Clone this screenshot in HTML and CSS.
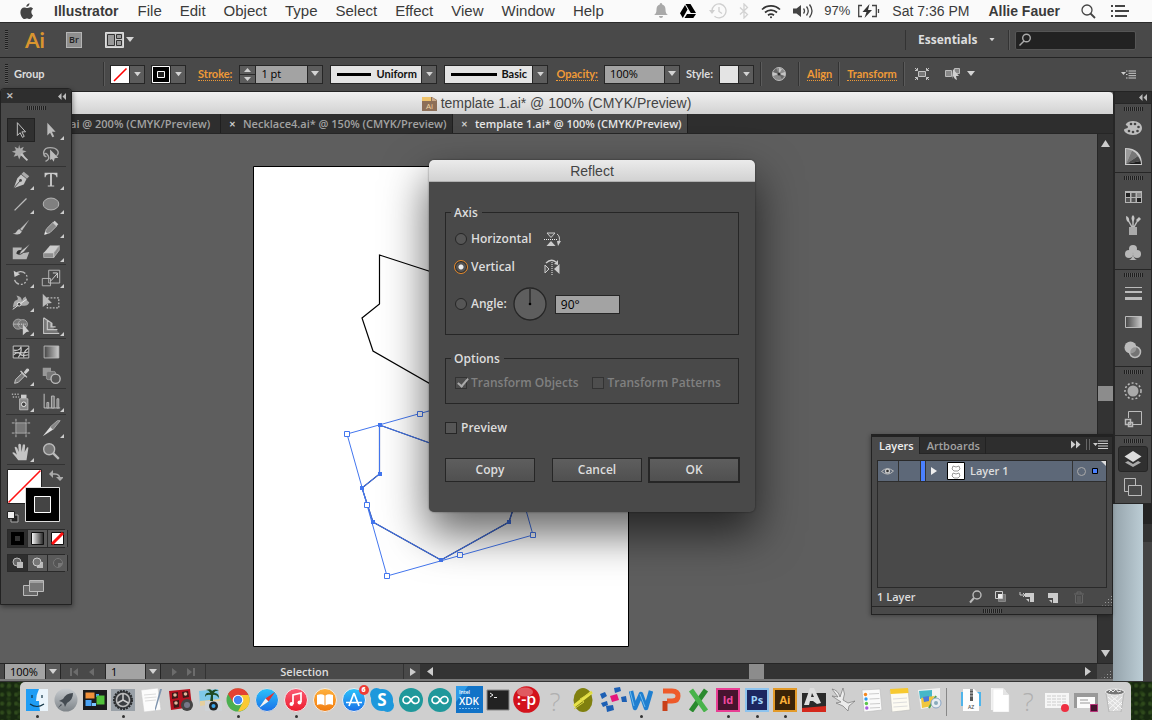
FILE: index.html
```html
<!DOCTYPE html>
<html lang="en">
<head>
<meta charset="utf-8">
<title>Illustrator - Reflect</title>
<link rel="stylesheet" href="styles.css">
</head>
<body>
<svg class="defs" aria-hidden="true">
  <defs>
    <linearGradient id="gGrey" x1="0" y1="0" x2="1" y2="0"><stop offset="0" stop-color="#444"/><stop offset="1" stop-color="#ccc"/></linearGradient>
    <linearGradient id="gWhite" x1="0" y1="0" x2="1" y2="0"><stop offset="0" stop-color="#fff"/><stop offset="1" stop-color="#222"/></linearGradient>
    <linearGradient id="gBlue" x1="0" y1="0" x2="0" y2="1"><stop offset="0" stop-color="#2cc3fa"/><stop offset="1" stop-color="#1a6fe8"/></linearGradient>
    <linearGradient id="gRed" x1="0" y1="0" x2="0" y2="1"><stop offset="0" stop-color="#fb5b74"/><stop offset="1" stop-color="#ec1c2c"/></linearGradient>
    <linearGradient id="gOrange" x1="0" y1="0" x2="0" y2="1"><stop offset="0" stop-color="#ffb13c"/><stop offset="1" stop-color="#f27a0c"/></linearGradient>
    <linearGradient id="gSilver" x1="0" y1="0" x2="0" y2="1"><stop offset="0" stop-color="#c8ccd0"/><stop offset="1" stop-color="#7d8388"/></linearGradient>
    <symbol id="down" viewBox="0 0 8 6"><path d="M0 0h8L4 5z" fill="#d4d4d4"/></symbol>
  </defs>
</svg>

<header class="menubar">
  <nav class="menus">
    <a href="#" class="apple" aria-label="Apple"><svg width="14" height="17" viewBox="0 0 14 17"><path d="M9.5.3c.1 1.900-1.400 3.500-3.200 3.500C6.200 2.100 7.700.5 9.500.3zM13 12.200c-.8 2-2.100 3.800-3.500 3.800-1 0-1.300-.6-2.500-.6s-1.600.6-2.500.6C2.600 16 .4 12.500.4 9.200c0-3.100 1.900-4.800 3.800-4.800 1.200 0 2.100.7 2.900.7.800 0 1.900-.8 3.300-.8 1.100 0 2.100.6 2.700 1.500-2.600 1.600-2 5.300-.1 6.400z" fill="#444"/></svg></a>
    <a href="#" class="app-name">Illustrator</a>
    <a href="#">File</a><a href="#">Edit</a><a href="#">Object</a><a href="#">Type</a><a href="#">Select</a><a href="#">Effect</a><a href="#">View</a><a href="#">Window</a><a href="#">Help</a>
  </nav>
  <div class="status">
    <svg width="14" height="16" viewBox="0 0 14 16"><path d="M7 0c1 0 1.200.8 1.200 1.500C10.500 2 11.500 4 11.500 6.500c0 3 .8 4.500 2.500 5.500H0c1.700-1 2.500-2.500 2.500-5.500 0-2.500 1-4.500 3.300-5C5.800.8 6 0 7 0zM5 13h4c0 1.200-.8 2-2 2s-2-.8-2-2z" fill="#a9a9a9"/></svg>
    <svg width="16" height="14" viewBox="0 0 16 14"><path d="M5.500 0h5L16 9h-5.200zM5 1l2.500 4.500L2.800 14 0 9.300zM7 10h9l-2.700 4H4.500z" fill="#000"/></svg>
    <svg width="19" height="16" viewBox="0 0 19 16" fill="none" stroke="#cfcfcf" stroke-width="1.300"><path d="M4 8a7 7 0 1 1 2.500 5.200M11 4v4.500l3 2"/><path d="M1 7l3 4 3-4z" fill="#cfcfcf" stroke="none"/></svg>
    <svg width="10" height="16" viewBox="0 0 10 16" fill="none" stroke="#d2d2d2" stroke-width="1.300"><path d="M1 4.500l7.500 7L5 15V1l3.500 3.500-7.500 7"/></svg>
    <svg width="20" height="15" viewBox="0 0 20 15" fill="none" stroke="#333" stroke-width="1.700"><path d="M1 5.500a13 13 0 0 1 18 0M4 8.500a9 9 0 0 1 12 0M7 11.200a5 5 0 0 1 6 0"/><circle cx="10" cy="13.300" r="1" fill="#333" stroke="none"/></svg>
    <svg width="21" height="16" viewBox="0 0 21 16" fill="none" stroke="#444" stroke-width="1.300"><path d="M0 5.500h3.500L8 2v12l-4.500-3.500H0z" fill="#444" stroke="none"/><path d="M10.500 5.500q2 2.500 0 5M13.500 3.500q3.500 4.500 0 9M16.500 1.500q5 6.500 0 13"/></svg>
    <span class="percent">97%</span>
    <svg width="23" height="14" viewBox="0 0 23 14" fill="none" stroke="#444" stroke-width="1.300"><path d="M5 1.500H1.700v11H5M15 1.500h4.300v11H15M21.500 5v4"/><path d="M12.500 0L5.500 8h4l-2 6 7.500-8h-4z" fill="#333" stroke="none"/></svg>
    <span class="clock">Sat 7:36 PM</span>
    <b class="user">Allie Fauer</b>
    <svg width="15" height="15" viewBox="0 0 15 15" fill="none" stroke="#444" stroke-width="1.300"><circle cx="6" cy="6" r="5"/><path d="M9.500 9.500L14 14" stroke-width="1.800"/></svg>
    <svg class="listico" width="18" height="12" viewBox="0 0 18 12" fill="#444"><path d="M0 0h2v2H0zM0 5h2v2H0zM0 10h2v2H0zM4 0h10v2H4zM4 5h14v2H4zM4 10h12v2H4z"/></svg>
  </div>
</header>

<div class="appbar">
  <i class="vgrip"></i>
  <span class="ai-logo">Ai</span>
  <button class="bridge" type="button">Br</button>
  <button class="plain arrange" type="button" aria-label="Arrange documents">
    <svg width="19" height="16" viewBox="0 0 19 16"><path d="M.5.500h18v15H.5z" fill="#c9c9c9" stroke="#ddd"/><path d="M2.500 2.500h7v11h-7zM11.500 2.500h5v4h-5zM11.500 8.500h5v5h-5z" fill="#999" stroke="#333"/></svg>
    <svg width="8" height="6"><use href="#down"/></svg>
  </button>
  <div class="appbar-right">
    <select class="workspace-name" aria-label="Workspace"><option>Essentials</option></select>
    <svg class="mini" width="6" height="4" viewBox="0 0 8 6"><use href="#down"/></svg>
    <i class="sep search-sep"></i>
    <label class="search"><svg width="14" height="14" viewBox="0 0 14 14" fill="none" stroke="#aaa" stroke-width="1.400"><circle cx="8.500" cy="5" r="3.800"/><path d="M6 8L1.500 12.500"/></svg><input type="text" aria-label="Search"></label>
  </div>
</div>

<div class="control">
  <i class="vgrip"></i>
  <span class="ctl-group">Group</span>
  <i class="sep"></i>
  <button class="picker fillpick" type="button" aria-label="Fill"><svg width="18" height="18"><path d="M0 0h18v18H0z" fill="#fff"/><path d="M3 15L15.500 2.500" stroke="#f00" stroke-width="1.600"/></svg><span class="arrow"><svg width="7" height="5"><use href="#down"/></svg></span></button>
  <button class="picker strokepick" type="button" aria-label="Stroke colour"><svg width="18" height="17"><path d="M.5.500h17v16H.5z" stroke="#fff"/><path d="M5.500 5.500h7v6h-7z" fill="#222" stroke="#fff"/></svg><span class="arrow"><svg width="7" height="5"><use href="#down"/></svg></span></button>
  <a href="#" class="link stroke-link">Stroke:</a>
  <div class="combo weight">
    <span class="spin"><svg width="15" height="17" viewBox="0 0 15 17"><path d="M0 8.500h15" stroke="#2c2c2c"/><path d="M4 6l3.500-4L11 6zM4 11l3.500 4 3.500-4z" fill="#d0d0d0"/></svg></span>
    <input type="text" value="1 pt" aria-label="Stroke weight">
    <button class="arrow" type="button" aria-label="Weights"><svg width="8" height="6"><use href="#down"/></svg></button>
  </div>
  <div class="brush profile"><i></i><select aria-label="Width profile"><option>Uniform</option></select><span class="arrow"><svg width="7" height="5"><use href="#down"/></svg></span></div>
  <div class="brush basic"><i></i><select aria-label="Brush"><option>Basic</option></select><span class="arrow"><svg width="7" height="5"><use href="#down"/></svg></span></div>
  <a href="#" class="link opacity-link">Opacity:</a>
  <div class="combo opacity">
    <input type="text" value="100%" aria-label="Opacity">
    <button class="arrow" type="button" aria-label="Opacities"><svg width="8" height="6"><use href="#down"/></svg></button>
  </div>
  <span class="style-label">Style:</span>
  <button class="picker stylepick" type="button" aria-label="Graphic style"><svg width="18" height="18"><path d="M0 0h18v18H0z" fill="#e4e4e4"/></svg><span class="arrow"><svg width="7" height="5"><use href="#down"/></svg></span></button>
  <i class="sep"></i>
  <button class="plain wheel" type="button" aria-label="Recolor"><svg width="14" height="14" viewBox="0 0 14 14"><circle cx="7" cy="7" r="6.500" fill="#8a8a8a" stroke="#bbb"/><path d="M7 7V1l3 1zM7 7l6-2v4zM7 7L1 9V5z" fill="#c4c4c4"/><path d="M7 7L1 5l3-4zM7 7l3 5 2-3z" fill="#666"/><circle cx="7" cy="7" r="1.500" fill="#333"/></svg></button>
  <i class="sep"></i>
  <a href="#" class="link">Align</a>
  <i class="sep"></i>
  <a href="#" class="link">Transform</a>
  <i class="sep"></i>
  <button class="plain isolate" type="button" aria-label="Isolate"><svg width="16" height="14" viewBox="0 0 16 14" fill="none" stroke="#c4c4c4"><path d="M4.500 4.500h7v5h-7z" fill="#777"/><path d="M1 1l2.500 2.500M15 1l-2.500 2.500M1 13l2.500-2.500M15 13l-2.500-2.500M1 3.500h2.500V1M15 3.500h-2.500V1M1 10.500h2.500V13M15 10.500h-2.500V13"/></svg></button>
  <button class="plain similar" type="button" aria-label="Select similar"><svg width="18" height="14" viewBox="0 0 18 14"><path d="M1.500 3.500h6v6h-6zM10.500 1.500h5v5h-5z" fill="#888" stroke="#bbb"/><path d="M9 2l6 7h-3l1 4-2-1-2-3-1 3z" fill="#d0d0d0"/></svg><svg width="8" height="6"><use href="#down"/></svg></button>
  <button class="plain flyout" type="button" aria-label="Panel menu"><svg width="15" height="9" viewBox="0 0 15 9"><path d="M0 2h5L2.500 5z" fill="#ccc"/><path d="M5 1h1.500M5 4.500h1.500M5 8h1.500M7.500 1H15M7.500 3.300H15M7.500 5.700H15M7.500 8H15" stroke="#ccc"/></svg></button>
</div>

<main class="stage">
  <section class="document">
    <h1 class="doc-title"><svg width="15" height="15" viewBox="0 0 15 15"><path d="M0 1h10l5 3v11H0z" fill="#8d6f58"/><path d="M0 1h9v4H0z" fill="#efc36b"/><path d="M10 1l5 4h-5z" fill="#c9a98a"/><text x="4" y="13" font-size="8" fill="#f3d9a5" class="ui">Ai</text></svg>template 1.ai* @ 100% (CMYK/Preview)</h1>
    <div class="tabs">
      <span class="tab first">ai @ 200% (CMYK/Preview)</span>
      <span class="tab second"><button class="x" type="button" aria-label="Close">✕</button>Necklace4.ai* @ 150% (CMYK/Preview)</span>
      <span class="tab active"><button class="x" type="button" aria-label="Close">✕</button>template 1.ai* @ 100% (CMYK/Preview)</span>
    </div>
    <div class="canvas-row">
      <div class="canvas">
        <svg class="artboard" width="376" height="481" viewBox="253 166 376 481" fill="none">
          <path d="M253.500 166.500h375v480h-375z" fill="#fff" stroke="#000"/>
          <path d="M441 275L379.500 255v49L362 318l11 33 68 39 68-39 11-33-18-14v-49z" stroke="#000" stroke-width="1.200"/>
          <path d="M441 447l-61.500-22v49L362 488l11 34 68 38 68-38 11-34-18-14v-49z" stroke="#223a80" stroke-width="1.200"/>
          <g stroke="#4376ee"><path d="M441 447l-61.500-22v49L362 488l11 34 68 38 68-38 11-34-18-14v-49z"/>
          <path d="M347 434l40 142 146-41-40-142z"/>
          <path d="M344.500 431.500h5v5h-5zM417.500 411.500h5v5h-5zM364.500 502.500h5v5h-5zM384.500 573.500h5v5h-5zM457.500 552.500h5v5h-5zM530.500 532.500h5v5h-5z" fill="#fff"/></g>
          <path d="M378 423h4v4h-4zM378 472h4v4h-4zM360 486h4v4h-4zM371 520h4v4h-4zM439 558h4v4h-4zM507 520h4v4h-4z" fill="#4376ee"/>
        </svg>
      </div>
      <div class="vscroll"><svg width="9" height="7" viewBox="0 0 9 7"><path d="M0 7h9L4.500 0z" fill="#ccc"/></svg><i class="thumb"></i><svg width="9" height="7" viewBox="0 0 9 7"><path d="M0 0h9L4.500 7z" fill="#ccc"/></svg></div>
    </div>
    <div class="statusbar">
      <div class="combo zoomer"><input type="text" value="100%" aria-label="Zoom"><button class="arrow" type="button" aria-label="Zoom levels"><svg width="8" height="6"><use href="#down"/></svg></button></div>
      <svg class="nav" width="28" height="10" viewBox="0 0 28 10" fill="#6c6c6c"><path d="M1 1h2v8H1zM9 1v8L4 5zM25 1v8l-5-4z"/></svg>
      <div class="combo pager"><input type="text" value="1" aria-label="Artboard"><button class="arrow" type="button" aria-label="Artboards"><svg width="8" height="6"><use href="#down"/></svg></button></div>
      <svg class="nav" width="28" height="10" viewBox="0 0 28 10" fill="#6c6c6c"><path d="M3 1v8l5-4zM18 1v8l5-4zM24 1h2v8h-2z"/></svg>
      <span class="tool-name">Selection</span>
      <button class="play" type="button" aria-label="Status menu"><svg width="6" height="8"><path d="M0 0v8l6-4z" fill="#ccc"/></svg></button>
      <div class="hscroll"><svg width="6" height="9"><path d="M6 0v9L0 4.500z" fill="#ccc"/></svg><i class="thumb"></i><svg width="6" height="9"><path d="M0 0v9l6-4.500z" fill="#ccc"/></svg></div>
      <span class="corner"></span>
    </div>
  </section>

  <aside class="rail">
    <div class="rail-panels">
      <div class="rail-head"><svg width="8" height="7"><path d="M3.500 0v7L0 3.500zM8 0v7L4.500 3.500z" fill="#bbb"/></svg></div>
      <div class="rail-group"><i class="hgrip"></i>
        <button type="button" aria-label="Color"><svg width="20" height="16" viewBox="0 0 20 16"><path d="M10 1c5 0 9 3 9 7s-4 7-9 7-9-3-9-5c0-2 4-1 4-3S2 6 3 4s4-3 7-3z" fill="#bdbdbd"/><g fill="#444"><circle cx="8" cy="4" r="1.300"/><circle cx="12" cy="4" r="1.300"/><circle cx="15.500" cy="7" r="1.300"/><circle cx="14.500" cy="11" r="1.300"/><circle cx="10" cy="12" r="1.300"/><circle cx="6" cy="11" r="1.300"/></g></svg></button>
        <button type="button" aria-label="Color guide"><svg width="17" height="17" viewBox="0 0 17 17"><path d="M0 0q17 0 17 17H0z" fill="#ccc"/><path d="M1 16V1q3 0 6 1.500z" fill="#999"/><path d="M1 16L7 2.500q4 2 6 5.500z" fill="#777"/><path d="M1 16l12-8q2 3 2.500 5z" fill="#4a4a4a"/><path d="M1 16l14.500-3 .5 3z" fill="#1c1c1c"/></svg></button></div>
      <div class="rail-group"><i class="hgrip"></i>
        <button type="button" aria-label="Swatches"><svg width="17" height="12" viewBox="0 0 17 12"><path d="M0 0h17v12H0z" fill="#b5b5b5"/><path d="M1 2h4v4H1zM12 7h4v4h-4z" fill="#222"/><path d="M6.500 2h4v4h-4zM1 7h4v4H1zM6.500 7h4v4h-4z" fill="#555"/><path d="M12 2h4v4h-4z" fill="#888"/></svg></button>
        <button type="button" aria-label="Brushes"><svg width="16" height="20" viewBox="0 0 16 20"><path d="M4 12h8v8H4z" fill="#aaa"/><path d="M7 12L3 5M8 12V5M9 12l4-7" stroke="#bbb" stroke-width="1.500"/><path d="M1 1q4 1 3 6-3 0-3-6zM8 0q3 3 0 7-3-4 0-7zM11 5l3-3 2 2-3 3z" fill="#c4c4c4"/></svg></button>
        <button type="button" aria-label="Symbols"><svg width="16" height="16" viewBox="0 0 16 16" fill="#b8b8b8"><circle cx="8" cy="4" r="4"/><circle cx="4" cy="9" r="4"/><circle cx="12" cy="9" r="4"/><path d="M8 7q0 7-4 8h8q-4-1-4-8z"/></svg></button></div>
      <div class="rail-group"><i class="hgrip"></i>
        <button type="button" aria-label="Stroke"><svg width="17" height="14"><path d="M0 0h17v1H0zM0 4h17v2H0zM0 10h17v3H0z" fill="#bbb"/></svg></button>
        <button type="button" aria-label="Gradient"><svg width="17" height="12"><path d="M.5.500h16v11H.5z" fill="url(#gGrey)" stroke="#bbb"/></svg></button>
        <button type="button" aria-label="Transparency"><svg width="18" height="18" viewBox="0 0 18 18"><circle cx="6.500" cy="6.500" r="6" fill="#bbb"/><circle cx="11" cy="11" r="5.500" fill="#888" fill-opacity=".7" stroke="#bbb" stroke-width="1.500"/></svg></button></div>
      <div class="rail-group"><i class="hgrip"></i>
        <button type="button" aria-label="Appearance"><svg width="18" height="18" viewBox="0 0 18 18"><circle cx="9" cy="9" r="5.500" fill="#aaa"/><circle cx="9" cy="9" r="8" fill="none" stroke="#bbb" stroke-width="1.500" stroke-dasharray="2 2"/></svg></button>
        <button type="button" aria-label="Graphic styles"><svg width="18" height="17" viewBox="0 0 18 17" fill="none" stroke="#bbb"><path d="M4.500 7V.5h13v13H9"/><path d="M1.500 8.500h5v5h-5zM4.500 11.500h4v4h-4z" stroke-width="1.500"/></svg></button></div>
      <div class="rail-group"><i class="hgrip"></i>
        <button type="button" class="on" aria-label="Layers"><svg width="18" height="17" viewBox="0 0 18 17"><path d="M1 11.500L9 16l8-4.500-3-1.500-5 3-5-3z" fill="#aaa"/><path d="M9 0l8.500 5.500L9 11 .5 5.500z" fill="#ddd"/></svg></button>
        <button type="button" aria-label="Artboards"><svg width="18" height="18" viewBox="0 0 18 18" fill="#494949" stroke="#bbb"><path d="M.5.500h11v13H.5z"/><path d="M4.500 7.500h13v10h-13z"/></svg></button></div>
    </div>
    <div class="behind"><i class="behind-window"></i><i class="behind-edge"></i></div>
  </aside>

  <section class="tools" aria-label="Tools">
    <div class="tools-head"><span>✕</span><svg width="8" height="7"><path d="M3.500 0v7L0 3.500zM8 0v7L4.500 3.500z" fill="#bbb"/></svg></div>
    <i class="hgrip"></i>
    <div class="tool-group">
      <button type="button" class="on" aria-label="Selection"><svg viewBox="0 0 24 24"><path d="M8 4l9 10h-4l2.500 5-2 1L11 15l-3 3z" fill="#333" stroke="#ccc"/></svg></button>
      <button type="button" class="more" aria-label="Direct selection"><svg viewBox="0 0 24 24"><path d="M8 4l9 10h-4l2.500 5-2 1L11 15l-3 3z" fill="#bbb"/></svg></button>
      <button type="button" aria-label="Magic wand"><svg viewBox="0 0 24 24"><path d="M10 2l1 4 4-2-1.500 4 4.500 1-4 2 2 4-4-1.500L10 18l-1.500-4.500L4 15l2-4-4-1.500L6.500 8 5 4l4 2z" fill="#aaa"/><path d="M12 12l7 7" stroke="#c4c4c4" stroke-width="2"/></svg></button>
      <button type="button" aria-label="Lasso"><svg viewBox="0 0 24 24"><path d="M7 15C2 13 3 5 11 5s11 5 7 9M7 15q-4-1-2-3t4 2-3 6" fill="none" stroke="#aaa" stroke-width="1.500"/><path d="M11 7l9 9-4 .500-1 4-2-3-2 1z" fill="#bbb"/></svg></button>
    </div>
    <div class="tool-group">
      <button type="button" class="more" aria-label="Pen"><svg viewBox="0 0 24 24"><path d="M15 3l6 5-2.500 2.500-6-5z" fill="#aaa"/><path d="M12 6l6 5-3 6-11 4 4-11z" fill="#c4c4c4"/><path d="M4 21l7-8" stroke="#444"/><circle cx="11.500" cy="12.500" r="1.500" fill="#444"/></svg></button>
      <button type="button" class="more" aria-label="Type"><svg viewBox="0 0 24 24"><path d="M5 4h14v5h-1q-.5-3.500-5-3.500V18h2.500v1h-7v-1H11V5.500Q6.500 5.500 6 9H5z" fill="#ccc"/></svg></button>
      <button type="button" class="more" aria-label="Line"><svg viewBox="0 0 24 24"><path d="M5 19L18 6" stroke="#bbb" stroke-width="1.400"/></svg></button>
      <button type="button" class="more" aria-label="Ellipse"><svg viewBox="0 0 24 24"><ellipse cx="12" cy="12" rx="8.500" ry="6.500" fill="#808080" stroke="#bbb"/></svg></button>
      <button type="button" aria-label="Paintbrush"><svg viewBox="0 0 24 24"><path d="M21 3L13 15l-2-2z" fill="#bbb"/><path d="M10 13l3 3q-3 5-10 2 3 0 4-2t3-3z" fill="#c4c4c4"/></svg></button>
      <button type="button" class="more" aria-label="Pencil"><svg viewBox="0 0 24 24"><path d="M5 19l2-6 7-7 4 4-7 7z" fill="#888" stroke="#bbb"/><path d="M14 6l2-2 4 4-2 2z" fill="#ccc"/><path d="M5 19l1-3 2 2z" fill="#eee"/></svg></button>
      <button type="button" aria-label="Blob brush"><svg viewBox="0 0 24 24"><path d="M3 7h10l-2 6 4 0 6-1-3 8H3z" fill="#b5b5b5"/><path d="M7 14q0-5 6-4l2 2q-3 5-8 2z" fill="#333"/><path d="M22 3l-7 9-5 3 2-4z" fill="#ccc" stroke="#444" stroke-width=".5"/></svg></button>
      <button type="button" class="more" aria-label="Eraser"><svg viewBox="0 0 24 24"><path d="M11 5h10l-6 8H4z" fill="#ccc"/><path d="M4 13h11v5H4zM15 13l6-8v5l-6 8z" fill="#8d8d8d" stroke="#ccc" stroke-width=".7"/></svg></button>
    </div>
    <div class="tool-group">
      <button type="button" class="more" aria-label="Rotate"><svg viewBox="0 0 24 24"><path d="M6 8a7 7 0 1 1-1 6" fill="none" stroke="#bbb" stroke-width="1.400" stroke-dasharray="12 2 2 2 2 2 2 2 2 2"/><path d="M4 4l1 7 6-3z" fill="#ccc"/></svg></button>
      <button type="button" class="more" aria-label="Scale"><svg viewBox="0 0 24 24" fill="none" stroke="#bbb"><path d="M9.500 3.500h12v14h-12zM2.500 12.500h9v8h-9z"/><path d="M12 15l7-8M14 6.500h5V12" stroke="#ddd"/></svg></button>
      <button type="button" class="more" aria-label="Width"><svg viewBox="0 0 24 24"><path d="M3 18q1-8 4-8t0-5q6 1 6 6 1-4 4-5 2 6 4 6-1 5-7 4t-11 2z" fill="#aaa"/><path d="M3 20L18 9" stroke="#eee"/><circle cx="10" cy="14.500" r="2" fill="#444" stroke="#eee"/></svg></button>
      <button type="button" aria-label="Free transform"><svg viewBox="0 0 24 24"><path d="M8 7.500h12.500v11H8z" fill="none" stroke="#bbb" stroke-width="1.400" stroke-dasharray="2 1.500"/><path d="M3 3l10 10-5 .500-5 4z" fill="#bbb"/></svg></button>
      <button type="button" class="more" aria-label="Shape builder"><svg viewBox="0 0 24 24"><circle cx="9" cy="10" r="5.500" fill="#777" stroke="#aaa"/><circle cx="14" cy="10" r="5" fill="#777" stroke="#aaa"/><path d="M4 10h14" stroke="#eee" stroke-dasharray="1 1"/><path d="M14 10l7 8-3 .500-4 3.500z" fill="#ccc"/></svg></button>
      <button type="button" class="more" aria-label="Perspective grid"><svg viewBox="0 0 24 24"><path d="M5 4v15h15l-2-3h-3v-3h-3V8z" fill="#777"/><path d="M4 3v17h17M8 6v10h11M12 9v4h5M4 3l9 6v4" fill="none" stroke="#c4c4c4" stroke-width="1.300"/></svg></button>
    </div>
    <div class="tool-group">
      <button type="button" aria-label="Mesh"><svg viewBox="0 0 24 24"><path d="M3.500 5.500h17v13h-17z" fill="#333" stroke="#ccc"/><path d="M4 10q7 1 8-4M4 15q5-4 7-1t9 1M9 18q4-5 3-12M15 18q-1-6 5-10M4 12q8 2 16 0" fill="none" stroke="#ccc" stroke-width="1.300"/></svg></button>
      <button type="button" aria-label="Gradient"><svg viewBox="0 0 24 24"><path d="M4.500 5.500h16v13h-16z" fill="url(#gGrey)" stroke="#bbb"/></svg></button>
      <button type="button" class="more" aria-label="Eyedropper"><svg viewBox="0 0 24 24"><path d="M5 20l1-4 7-7 3 3-7 7z" fill="#777" stroke="#ccc"/><path d="M12 6l7 7-1 1-7-7zM15 8l3-4q3-1 3 2l-4 4z" fill="#ccc"/></svg></button>
      <button type="button" aria-label="Blend"><svg viewBox="0 0 24 24"><path d="M3 3h9v9H3z" fill="#999"/><rect x="7" y="7" width="10" height="9" rx="2" fill="#777" stroke="#999"/><circle cx="17" cy="15" r="5" fill="#555" stroke="#bbb" stroke-width="1.500"/></svg></button>
    </div>
    <div class="tool-group">
      <button type="button" class="more" aria-label="Symbol sprayer"><svg viewBox="0 0 24 24"><path d="M10.500 8.500h9v12h-9z" fill="#888" stroke="#bbb"/><path d="M12 4h6v4h-6z" fill="#ccc"/><circle cx="15" cy="14.500" r="2.500" fill="#444" stroke="#eee"/><path d="M2 3.500h8M3 6.500h7" stroke="#aaa" stroke-width="1.500" stroke-dasharray="1.500 1.500"/></svg></button>
      <button type="button" class="more" aria-label="Graph"><svg viewBox="0 0 24 24"><path d="M4.500 3v15.500H22" fill="none" stroke="#ccc"/><path d="M7.500 12.500h2v6h-2zM12.500 5.500h3v13h-3zM18.500 8.500h2v10h-2z" fill="#777" stroke="#bbb"/></svg></button>
    </div>
    <div class="tool-group">
      <button type="button" aria-label="Artboard"><svg viewBox="0 0 24 24"><path d="M7 7h10v10H7z" fill="#777"/><path d="M6.500 2v20M17.500 2v20M2 6.500h20M2 17.500h20" stroke="#bbb" stroke-dasharray="3 1 12 1 3"/></svg></button>
      <button type="button" class="more" aria-label="Slice"><svg viewBox="0 0 24 24"><path d="M22 4h-3l-8 7 3 3z" fill="#888" stroke="#aaa"/><path d="M11 11l3 3-11 7z" fill="#ddd"/></svg></button>
      <button type="button" class="more" aria-label="Hand"><svg viewBox="0 0 24 24"><path d="M9 21q-2-3-6.500-8 1-2 5 2L5 7q1.500-2 3 1l1.500 4L9 4q1.500-2 3 0l.5 8L14 4q2-1.500 2.500 1L16 12l2.500-5q2-.5 1.500 1L18 21z" fill="#c4c4c4"/></svg></button>
      <button type="button" aria-label="Zoom"><svg viewBox="0 0 24 24"><circle cx="10" cy="9" r="6" fill="#777" stroke="#bbb" stroke-width="1.500"/><path d="M14 13l6.500 6.500" stroke="#bbb" stroke-width="2.500"/></svg></button>
    </div>
    <div class="swatches">
      <svg width="56" height="56" viewBox="0 0 56 56"><path d="M.5.500h34v34H.5z" fill="#fff" stroke="#222"/><path d="M1.500 33.500l32-32" stroke="#f11" stroke-width="1.600"/><path d="M45 5h3q5 0 5 6" fill="none" stroke="#aaa" stroke-width="1.500"/><path d="M42 5l4-4v8zM49 8h8l-4 4z" fill="#aaa"/><path d="M18.500 18.500h34v34h-34z" fill="#000" stroke="#ddd"/><path d="M27.500 27.500h16v16h-16z" fill="#444" stroke="#fff"/><path d="M4 46h7v7H4z" fill="#222" stroke="#aaa"/><path d="M.5 42.500h7v7h-7z" fill="#eee" stroke="#222"/></svg>
    </div>
    <div class="modes">
      <button type="button" class="on" aria-label="Color"><svg width="13" height="13"><path d="M0 0h13v13H0z"/><path d="M4 4h5v5H4z" fill="#333"/></svg></button>
      <button type="button" aria-label="Gradient fill"><svg width="13" height="13"><path d="M.5.500h12v12H.5z" fill="url(#gWhite)" stroke="#111"/></svg></button>
      <button type="button" aria-label="None"><svg width="13" height="13"><path d="M.5.500h12v12H.5z" fill="#fff" stroke="#111"/><path d="M1 12L12 1" stroke="#f11" stroke-width="3"/></svg></button>
    </div>
    <div class="modes drawmodes">
      <button type="button" class="on" aria-label="Draw normal"><svg width="12" height="12"><circle cx="5" cy="5" r="4" fill="#666" stroke="#bbb"/><path d="M5 5h6v6H5z" fill="#bbb"/></svg></button>
      <button type="button" aria-label="Draw behind"><svg width="12" height="12"><path d="M5 5h6v6H5z" fill="#bbb"/><circle cx="5" cy="5" r="4" fill="#777" stroke="#ccc"/></svg></button>
      <button type="button" aria-label="Draw inside"><svg width="12" height="12"><circle cx="6" cy="6" r="4.500" fill="#555" stroke="#777"/><path d="M6 6h4v2L8 10H6z" fill="#777"/></svg></button>
    </div>
    <button class="plain screenmode" type="button" aria-label="Screen mode"><svg width="21" height="17"><path d="M.5 5.500h14v10H.5z" fill="#666" stroke="#bbb"/><path d="M6.500.500h14v11h-14z" fill="#777" stroke="#bbb"/><path d="M7 2h13" stroke="#ccc"/></svg></button>
  </section>

  <section class="layers">
    <div class="layer-tabs">
      <button type="button" class="ltab on">Layers</button><button type="button" class="ltab">Artboards</button>
      <svg width="37" height="11" viewBox="0 0 37 11"><path d="M0 1.500v8l4.500-4zM5 1.500v8l4.500-4zM22 4h5l-2.500 3z" fill="#ccc"/><path d="M15.500 0v11M18.500 0v11" stroke="#666"/><path d="M27 2h10M27 4.500h10M27 7h10M27 9.500h10" stroke="#ccc"/></svg>
    </div>
    <div class="layer-list">
      <div class="layer-row">
        <span class="eye"><svg width="13" height="10" viewBox="0 0 13 10"><path d="M.5 5.500Q6 0 12.500 5 7 11 .500 5.500z" fill="#5d6878" stroke="#bbb"/><circle cx="6.500" cy="5" r="2.600" fill="#ccc"/><circle cx="6.500" cy="5" r="1.300" fill="#333"/></svg></span>
        <span class="lock"></span><span class="bar"></span>
        <svg class="tri" width="6" height="8"><path d="M0 0v8l6-4z" fill="#eee"/></svg>
        <svg class="thumbnail" width="18" height="18"><path d="M.5.500h17v17H.5z" fill="#fff" stroke="#000"/><path d="M6 4l3 1 3-1 1 3-2 2H7L5 7zM6 11l3 1 3-1 1 3-2 2H7l-2-2z" fill="none" stroke="#999"/></svg>
        <span class="layer-name">Layer 1</span>
        <svg class="target" width="34" height="20"><path d="M.5 0v20" stroke="#333"/><circle cx="9.500" cy="10.500" r="4" fill="none" stroke="#aaa"/><path d="M20.500 7.500h5v5h-5z" fill="#4a80ff" stroke="#000"/><path d="M29 0h5v5z" fill="#ddd"/></svg>
      </div>
    </div>
    <div class="layer-foot"><span>1 Layer</span>
      <svg width="116" height="14" viewBox="0 0 116 14"><circle cx="8" cy="5" r="4" fill="none" stroke="#bbb" stroke-width="1.400"/><path d="M5 8l-4 4.500" stroke="#bbb" stroke-width="2"/><path d="M29.500 4.500h7v7h-7z" fill="#777" stroke="#888"/><path d="M26.500 1.500h7v7h-7z" fill="none" stroke="#ccc"/><path d="M29 4h4v4h-4z" fill="#eee"/><path d="M51 2v3h5M54 3l2 2-2 2" stroke="#ccc" fill="none"/><path d="M56 3h9v9h-4V7h-5zM57 9h3v3zM79 3h10v10h-5V8h-5zM80 10h3v3z" fill="#ccc"/><path d="M105 4h10M108 4V2h4v2M106.500 5v8h7V5M109 6v6M111 6v6" fill="none" stroke="#666"/></svg>
      <i class="dots"></i></div>
    <div class="layer-grip"><i class="hgrip"></i></div>
  </section>

  <form class="dialog" aria-labelledby="dlg">
    <h2 id="dlg">Reflect</h2>
    <div class="dialog-body">
      <fieldset class="axis"><legend>Axis</legend>
        <div class="line"><input type="radio" name="axis" id="rh"><label for="rh">Horizontal</label><svg class="flip" width="17" height="15" viewBox="0 0 17 15"><path d="M3 1h8L7 5.500z" fill="#555" stroke="#ccc"/><path d="M2.500 14h9L7 9z" fill="#ccc"/><path d="M0 7.500h14" stroke="#eee" stroke-dasharray="1 1"/><path d="M13 2q3.500 2 2 8" fill="none" stroke="#ccc"/><path d="M13 9h4l-3 5z" fill="#ccc"/></svg></div>
        <div class="line"><input type="radio" name="axis" id="rv" checked><label for="rv">Vertical</label><svg class="flip vflip" width="16" height="16" viewBox="0 0 16 16"><path d="M1 6v8l4-4z" fill="#555" stroke="#ccc"/><path d="M15.500 5v10L10 10z" fill="#ccc"/><path d="M8 3v13" stroke="#eee" stroke-dasharray="1 1"/><path d="M2 4q5-5 10-1" fill="none" stroke="#ccc" stroke-width="1.300"/><path d="M10 5l4-4v5z" fill="#ccc"/></svg></div>
        <div class="line tall"><input type="radio" name="axis" id="ra"><label for="ra">Angle:</label><svg class="dial" width="34" height="34"><circle cx="17" cy="17" r="16" fill="#5e5e5e" stroke="#262626" stroke-width="1.300"/><path d="M17 2v15" stroke="#222" stroke-width="1.300"/><circle cx="17" cy="17" r="1.300"/></svg><input type="text" class="angle" value="90°" aria-label="Angle"></div>
      </fieldset>
      <fieldset class="options"><legend>Options</legend>
        <div class="line"><input type="checkbox" id="to" checked disabled><label for="to">Transform Objects</label><input type="checkbox" id="tp" disabled><label for="tp">Transform Patterns</label></div>
      </fieldset>
      <div class="preview"><input type="checkbox" id="pv"><label for="pv">Preview</label></div>
      <div class="actions"><button type="button">Copy</button><button type="button" class="cancel">Cancel</button><button type="submit" class="ok">OK</button></div>
    </div>
  </form>
</main>

<footer class="desktop">
  <div class="dock">
    <a href="#" class="run" aria-label="Finder"><svg viewBox="0 0 24 24"><path d="M1 1h22v22H1z" fill="#eaf4fb"/><path d="M1 1h13q-3 6-3 12h3q0 5 1 10H1z" fill="#1f9df5"/><path d="M7 7v3M17 7v3M5 16q7 5 14 0" stroke="#134" fill="none" stroke-width="1.200"/></svg></a>
    <a href="#" aria-label="Launchpad"><svg viewBox="0 0 24 24"><circle cx="12" cy="12" r="11.500" fill="url(#gSilver)"/><path d="M19 5q-7 0-10 6l-4 2 3 1 2 2 1 3 2-4q6-3 6-10zM7 16l-3 4 4-3z" fill="#444b52"/></svg></a>
    <a href="#" aria-label="Mission Control"><svg viewBox="0 0 24 24"><path d="M0 2h24v20H0z" fill="#1b1b1d"/><path d="M2.500 4.500h9v6h-9z" fill="#f2913a"/><path d="M2.500 12h6v6h-6zM13 6h3v3h-3z" fill="#4aa3f5"/><path d="M13.500 7.500h8v9h-8z" fill="#51c13b"/><path d="M9 15h4v3H9z" fill="#7cc5ff"/></svg></a>
    <a href="#" class="run" aria-label="System Preferences"><svg viewBox="0 0 24 24"><path d="M0 1h24v22H0z" fill="#9aa1a8"/><circle cx="12" cy="12" r="9" fill="#3b3e42" stroke="#2a2c2e" stroke-dasharray="2 1" stroke-width="2"/><circle cx="12" cy="12" r="6.500" fill="none" stroke="#bbb" stroke-width="1.500"/><path d="M12 12V6M12 12l5.500 3M12 12l-5.500 3" stroke="#ccc" stroke-width="1.500"/></svg></a>
    <a href="#" aria-label="TextEdit"><svg viewBox="0 0 24 24"><path d="M1 2l17-2 3 22-17 2z" fill="#fcfcfc" stroke="#ccc" stroke-width=".6"/><path d="M4 7l12-1M4.500 10l12-1M5 13l11-1" stroke="#ddd"/><path d="M22 1l-6 20-1 2 0-3 5-19z" fill="#7d93ad"/></svg></a>
    <a href="#" aria-label="Photo Booth"><svg viewBox="0 0 24 24"><path d="M0 3l21-2 2 18-21 3z" fill="#b5121f"/><path d="M3 5l6-1v6l-6 1zM13 4l6-1 1 6-6 1zM4 13l6-1v7l-5 1z" fill="#3a1a18"/><circle cx="6" cy="7" r="1.800" fill="#e3b79c"/><circle cx="16.500" cy="6" r="1.800" fill="#e3b79c"/><circle cx="7" cy="15" r="1.800" fill="#e3b79c"/><circle cx="18" cy="17" r="6" fill="#444"/><circle cx="18" cy="17" r="3" fill="#778"/></svg></a>
    <a href="#" aria-label="iPhoto"><svg viewBox="0 0 24 24"><path d="M1 3l19-2 2 13L2 17z" fill="#7fc8e8"/><path d="M2 13l20-2v4L2 18z" fill="#e5cf9e"/><path d="M12 14l1-7q-5-1-6 2 0-5 5-4-1-3-4-3 5-2 6 1 3-3 7 0-4-1-5 2 5 0 5 5-3-4-6-3v7z" fill="#1e4a22"/><path d="M7 13h17v10H7z" fill="#cfd3d6"/><circle cx="15.500" cy="18" r="4.500" fill="#222"/><circle cx="15.500" cy="18" r="2" fill="#3aa5e8"/></svg></a>
    <a href="#" class="run" aria-label="Chrome"><svg viewBox="0 0 24 24"><circle cx="12" cy="12" r="11.500" fill="#4caf50"/><path d="M2 6A11.500 11.500 0 0 1 22.500 7H12v5L7 14z" fill="#e34133"/><path d="M22.500 7A11.500 11.500 0 0 1 12 23.500L17 14l-2-7z" fill="#fbc933"/><circle cx="12" cy="12" r="5.300" fill="#fff"/><circle cx="12" cy="12" r="4.200" fill="#4285f4"/></svg></a>
    <a href="#" aria-label="Safari"><svg viewBox="0 0 24 24"><circle cx="12" cy="12" r="11.500" fill="url(#gBlue)" stroke="#ddd"/><path d="M20 4l-6.500 9.500-3-3z" fill="#e8312a"/><path d="M4 20l6.500-9.500 3 3z" fill="#f2f2f2"/></svg></a>
    <a href="#" class="run" aria-label="iTunes"><svg viewBox="0 0 24 24"><circle cx="12" cy="12" r="11.500" fill="url(#gRed)" stroke="#eee"/><path d="M9 16V7l8-2v9" fill="none" stroke="#fff" stroke-width="1.700"/><circle cx="7.500" cy="16" r="2" fill="#fff"/><circle cx="15.500" cy="14.500" r="2" fill="#fff"/></svg></a>
    <a href="#" aria-label="iBooks"><svg viewBox="0 0 24 24"><circle cx="12" cy="12" r="11.500" fill="url(#gOrange)" stroke="#eee"/><path d="M4 7q5-1.500 7.500.5v10Q8 15.500 4 17zM20 7q-5-1.500-7.500.5v10q3.500-2 7.500-.5z" fill="#fff"/></svg></a>
    <a href="#" class="badged" aria-label="App Store"><svg viewBox="0 0 24 24"><circle cx="12" cy="12" r="11.500" fill="url(#gBlue)" stroke="#eee"/><path d="M12 5L7 18M12 5l5 13M4 14.500h16" stroke="#fff" stroke-width="1.700"/></svg><b class="badge">6</b></a>
    <a href="#" aria-label="Skype"><svg viewBox="0 0 24 24"><circle cx="12" cy="12" r="11" fill="#1d98dc"/><circle cx="6.500" cy="6.500" r="6.500" fill="#1d98dc"/><circle cx="17.500" cy="17.500" r="6.500" fill="#1d98dc"/><text x="12" y="18" font-size="17" font-weight="700" text-anchor="middle" fill="#fff" class="ui">S</text></svg></a>
    <a href="#" aria-label="Arduino"><svg viewBox="0 0 24 24"><circle cx="12" cy="12" r="12" fill="#1f989b"/><path d="M12 12q-2-3.500-4.500-3.500a3.500 3.500 0 0 0 0 7Q10 15.500 12 12t4.500-3.500a3.500 3.500 0 0 1 0 7Q14 15.500 12 12z" fill="none" stroke="#fff" stroke-width="1.600"/></svg></a>
    <a href="#" aria-label="Arduino 2"><svg viewBox="0 0 24 24"><circle cx="12" cy="12" r="12" fill="#1f989b"/><path d="M12 12q-2-3.500-4.500-3.500a3.500 3.500 0 0 0 0 7Q10 15.500 12 12t4.500-3.500a3.500 3.500 0 0 1 0 7Q14 15.500 12 12z" fill="none" stroke="#fff" stroke-width="1.600"/></svg></a>
    <a href="#" class="big" aria-label="Intel XDK"><svg viewBox="0 0 27 27"><path d="M0 0h27v27H0z" fill="#1173c7"/><path d="M0 0h12L0 16z" fill="#2f9be8"/><text x="3" y="8" font-size="5" fill="#fff" class="ui">Intel</text><text x="3" y="19" font-size="10" fill="#fff" class="ui">XDK</text><path d="M3 22.500h20" stroke="#7bbdf0" stroke-dasharray="2 1"/></svg></a>
    <a href="#" aria-label="Terminal"><svg viewBox="0 0 24 24"><path d="M1 2h22v20H1z" fill="#222" stroke="#888"/><path d="M4 5l3 2-3 2M8 9.500h3" stroke="#eee" fill="none"/></svg></a>
    <a href="#" class="big" aria-label="Photo app"><svg viewBox="0 0 27 27"><circle cx="13.500" cy="13.500" r="13.300" fill="#d3131c"/><ellipse cx="12" cy="6" rx="8" ry="4.500" fill="#fff" opacity=".3"/><text x="13.500" y="18.500" font-size="16" font-weight="600" text-anchor="middle" fill="#fff" class="ui">:-p</text></svg></a>
    <a href="#" class="q">?</a>
    <a href="#" aria-label="Sketch utility"><svg viewBox="0 0 24 24"><ellipse cx="11" cy="12" rx="9.500" ry="12" fill="#80800f"/><path d="M20 4L2 18" stroke="#e8e34a" stroke-width="3"/><path d="M20 4L8 11l4 3-10 7" fill="none" stroke="#d8d440" stroke-width="1"/></svg></a>
    <a href="#" class="big" aria-label="Molecules"><svg viewBox="0 0 27 27"><path d="M14 2l6-1 1 4-6 2zM0 8l5-2 2 4-5 3zM21 11l5-1 1 6-5 0zM1 17l6-2 1 4-5 2zM6 20l7-1 1 5-7 2z" fill="#1c5fb4"/><path d="M10 10l7-2 2 6-7 2z" fill="#e5177c"/></svg></a>
    <a href="#" class="run" aria-label="Word"><svg viewBox="0 0 24 24"><path d="M2 3l4 17 6-14 5 14 5-17" fill="none" stroke="#1f7fd0" stroke-width="4.500" stroke-linejoin="round"/><path d="M1 3l4 15M11 6l5 13" stroke="#6dbcf0"/></svg></a>
    <a href="#" aria-label="PowerPoint"><svg viewBox="0 0 24 24"><path d="M5 3h9q6 0 6 5t-6 5H9" fill="none" stroke="#ee5a2a" stroke-width="5"/><path d="M7 13v10" stroke="#c9401a" stroke-width="5"/></svg></a>
    <a href="#" aria-label="Excel"><svg viewBox="0 0 24 24"><path d="M19 2L4 23" stroke="#2b8a2f" stroke-width="5"/><path d="M4 2l15 21" stroke="#48b34a" stroke-width="5"/></svg></a>
    <a href="#" class="run" aria-label="InDesign"><svg viewBox="0 0 24 24"><path d="M1 1h22v22H1z" fill="#47142f" stroke="#e83e93" stroke-width="2"/><text x="12" y="16" font-size="11" font-weight="700" text-anchor="middle" fill="#f04aa0" class="ui">Id</text></svg></a>
    <a href="#" class="run" aria-label="Photoshop"><svg viewBox="0 0 24 24"><path d="M1 1h22v22H1z" fill="#1c2660" stroke="#8dc3ee" stroke-width="2"/><text x="12" y="16" font-size="11" font-weight="700" text-anchor="middle" fill="#9fd4fa" class="ui">Ps</text></svg></a>
    <a href="#" class="run" aria-label="Illustrator"><svg viewBox="0 0 24 24"><path d="M1 1h22v22H1z" fill="#3a2307" stroke="#e39a28" stroke-width="2"/><text x="12" y="16" font-size="11" font-weight="700" text-anchor="middle" fill="#fab038" class="ui">Ai</text></svg></a>
    <a href="#" aria-label="AutoCAD"><svg viewBox="0 0 24 24"><path d="M0 5h24v19H0z" fill="#2a2a2a"/><path d="M0 20l24-2v6H0z" fill="#d4281c"/><path d="M8 0L2 17h5l1-4h3l4 3 4-1L12 0zM9 9l1-4 2 4z" fill="#ddd" fill-rule="evenodd"/></svg></a>
    <a href="#" class="big" aria-label="Quill"><svg viewBox="0 0 27 27"><path d="M2 3q6 1 8 8l3-9q3 6 0 12l5 3 7-2-6 5-1 5-5-5-7-3 5-1-9-6 6 1z" fill="#ececec" stroke="#777" stroke-width=".7"/></svg></a>
    <a href="#" aria-label="Reminders"><svg viewBox="0 0 24 24"><path d="M2 2l18-1 2 21-18 2z" fill="#fafafa" stroke="#bbb" stroke-width=".6"/><path d="M9 6l10-.5M9.500 11l10-.5M10 16l10-.5M10 20l10-.5" stroke="#ccc"/><circle cx="5.500" cy="6.500" r="1.700" fill="#f5871f"/><circle cx="6" cy="11" r="1.700" fill="#2d9bf0"/><circle cx="6.400" cy="15.500" r="1.700" fill="#5cc44a"/><circle cx="6.800" cy="20" r="1.700" fill="#a95be0"/></svg></a>
    <a href="#" aria-label="Notes"><svg viewBox="0 0 24 24"><path d="M2 2l18-1 2 21-18 2z" fill="#fdfbf2" stroke="#bbb" stroke-width=".6"/><path d="M2 1l18-1 .5 5L2.500 6z" fill="#f7c92f"/><path d="M5 11l14-1M5 15l14-1M5.500 19l14-1" stroke="#ddd"/></svg></a>
    <a href="#" class="big" aria-label="Preview"><svg viewBox="0 0 27 27"><path d="M2 4l22-2v18L5 23z" fill="#f2f2f2"/><path d="M3 5l13-1v8L4 13z" fill="#45b8c8"/><path d="M5 12l13-2-2 10-10 2z" fill="#f0c63e"/><path d="M7 11l6-1v5l-5 1z" fill="#4f79d8"/><path d="M13 22l7-12" stroke="#54a44d" stroke-width="2"/><circle cx="20" cy="17" r="5" fill="#e8edf2" stroke="#8aa5c4"/><circle cx="20" cy="17" r="2" fill="#8ab"/></svg></a>
    <i class="dock-sep"></i>
    <a href="#" aria-label="Archive"><svg viewBox="0 0 24 24"><path d="M2 4h20v14H2z" fill="#4fb4ea"/><path d="M4 1h11l5 5v17H4z" fill="#fdfdfd"/><path d="M11 1h3v12h-3z" fill="#555"/><path d="M11 2h3M11 5h3M11 8h3" stroke="#ccc"/><text x="12" y="21" font-size="5" text-anchor="middle" fill="#555" class="ui">AZ</text></svg></a>
    <a href="#" aria-label="Documents"><svg viewBox="0 0 24 24"><path d="M3 0h12l3 3v19H3z" fill="#f2f2f2"/><path d="M5 1h10l6 6v17H5z" fill="#fff" stroke="#ddd" stroke-width=".5"/><path d="M15 1l6 6h-6z" fill="#e4e4e4"/></svg></a>
    <a href="#" class="q">?</a>
    <a href="#" aria-label="Minimized window"><svg viewBox="0 0 24 24"><path d="M0 5h24v15H0z" fill="#f6f6f6"/><path d="M2 8h20M2 11h20M2 14h20M2 17h18" stroke="#ccc" stroke-dasharray="4 1"/><circle cx="20" cy="20" r="4" fill="#ee2f42"/></svg></a>
    <a href="#" aria-label="Minimized document"><svg viewBox="0 0 24 24"><path d="M0 5h24v15H0z" fill="#999"/><path d="M3 9h18v11H3z" fill="#fbfbfb"/><path d="M6 12h8M6 15h10" stroke="#999"/><path d="M16.500 16.500h7v7h-7z" fill="#47142f" stroke="#b8337a"/></svg></a>
    <a href="#" aria-label="Trash"><svg viewBox="0 0 24 24"><path d="M3 5h18l-3 19H6z" fill="#dcdcdc" stroke="#aaa" stroke-width=".7"/><path d="M5 9l14 12M8 8l11 9M5 13l10 9M19 9L6 21M15 8L5 16M19 14l-9 9" stroke="#f8f8f8"/><ellipse cx="12" cy="4" rx="9.500" ry="3" fill="#777" stroke="#eee"/><path d="M6 4l2-2 2 2 3-3 2 3 3-1" stroke="#eee" fill="none"/></svg></a>
  </div>
</footer>
</body>
</html>
```
FILE: styles.css
```css
* { box-sizing: border-box; }
html, body { height: 100%; }
body {
  margin: 0;
  display: flex;
  flex-direction: column;
  overflow: hidden;
  background: #5e5e5e;
  color: #ddd;
  font: 600 11px/16px "Open Sans", "Noto Sans", sans-serif;
}
.defs { position: absolute; width: 0; height: 0; }
.ui { font-family: "Open Sans", sans-serif; }
svg { display: block; flex: none; }
a { color: inherit; text-decoration: none; }
button, input, select { font: inherit; color: inherit; margin: 0; padding: 0; border: 0; background: none; border-radius: 0; }
select { appearance: none; }
.plain { display: flex; align-items: center; }

/* System menu bar */
.menubar {
  flex: none;
  display: flex;
  height: 22px;
  padding: 0 23px 0 20px;
  background: #fafafa;
  color: #3a3a3a;
  font: 15px/22px "Liberation Sans", Arial, sans-serif;
}
.menus, .status { display: flex; align-items: center; }
.menus { gap: 18px; }
.app-name { font-weight: 700; font-size: 14px; margin: 0 1px 0 2px; }
.status { margin-left: auto; gap: 12px; }
.percent { font-size: 13px; margin: 0 -5px 0 -2px; }
.clock, .user { font-size: 14px; }
.user { margin: 0 9px 0 7px; }
.listico { margin-left: 3px; }

/* Application bar */
.appbar {
  flex: none;
  display: flex;
  align-items: center;
  height: 36px;
  padding: 0 16px 0 5px;
  background: #494949;
  border-top: 1px solid #2b2b2b;
  border-bottom: 1px solid #242424;
}
.vgrip {
  flex: none;
  width: 3px;
  height: 20px;
  background: repeating-linear-gradient(#1f1f1f 0 1px, #5a5a5a 1px 2px);
}
.ai-logo { margin-left: 17px; color: #d9952f; font: 700 21px/24px Lato, sans-serif; }
.bridge {
  margin-left: 21px;
  width: 16px;
  height: 16px;
  line-height: 12px;
  background: #8e8e8e;
  border: 1px solid #b5b5b5;
  color: #222;
  font-size: 9px;
}
.arrange { margin-left: 23px; gap: 2px; }
.appbar-right { display: flex; align-items: center; margin-left: auto; }
.workspace-name { border-left: 1px solid #333; padding-left: 12px; height: 20px; width: 84px; font-size: 12px; font-weight: 700; }
.mini { margin: 0 13px 0 0; }
.search {
  display: flex;
  align-items: center;
  width: 121px;
  height: 19px;
  padding: 0 2px;
  background: #222;
  border: 1px solid #555;
  border-radius: 2px;
}
.search input { width: 90px; }

/* Control bar */
.control {
  flex: none;
  display: flex;
  align-items: center;
  height: 34px;
  padding: 0 16px 1px 5px;
  background: #494949;
  border-bottom: 1px solid #242424;
  font-family: Lato, "Open Sans", sans-serif;
  font-weight: 700;
}
.control > * { flex: none; }
.sep { flex: none; width: 2px; height: 24px; background: #333; border-right: 1px solid #5b5b5b; margin: 0 7px 0 6px; }
.appbar-right .search-sep { height: 20px; margin: 0 5px 0 0; }
.ctl-group { width: 95px; padding-left: 6px; }
.ctl-group + .sep { margin: 0 5px 0 0; }
.picker, .combo, .brush { display: flex; height: 19px; border: 1px solid #262626; }
.picker { padding: 0; }
.picker > svg { height: 17px; }
.arrow { display: flex; flex: none; width: 15px; align-items: center; justify-content: center; align-self: stretch; background: #5c5c5c; border-left: 1px solid #262626; }
.strokepick { margin-left: 6px; }
.link { color: #f09a37; border-bottom: 1px dotted #f09a37; line-height: 13px; }
.stroke-link { margin-left: 12px; }
.spin { background: #5c5c5c; border-right: 1px solid #262626; }
.combo input { background: #a3a3a3; color: #000; padding-left: 5px; font: 400 11px/16px "Open Sans", sans-serif; }
.weight { margin-left: 7px; }
.weight input { width: 51px; }
.brush { margin-left: 7px; background: #e4e4e4; align-items: center; }
.brush i { width: 34px; height: 3px; background: #000; margin-left: 6px; }
.brush select { width: 50px; padding-left: 5px; color: #111; }
.basic i { width: 46px; }
.basic select { width: 35px; padding-left: 4px; }
.opacity-link { margin-left: 8px; }
.opacity { margin-left: 6px; }
.opacity input { width: 59px; }
.style-label { margin: 0 6px; }
.control .wheel { margin: 0 6px 0 3px; }
.isolate { margin: 0 5px 0 2px; }
.similar { margin-left: 9px; gap: 5px; }
.flyout { margin-left: auto; }

/* Workspace */
.stage { flex: 1; min-height: 0; display: flex; position: relative; }
.document { flex: 1; min-width: 0; display: flex; flex-direction: column; }
.doc-title {
  flex: none;
  display: flex;
  align-items: center;
  justify-content: center;
  gap: 4px;
  height: 22px;
  margin: 0;
  background: linear-gradient(#f0f0f0, #d2d2d2);
  border-top-right-radius: 4px;
  color: #444;
  font: 14px/22px "Liberation Sans", Arial, sans-serif;
}
.tabs { flex: none; display: flex; height: 20px; background: #2e2e2e; border-bottom: 1px solid #262626; line-height: 20px; color: #a2a2a2; }
.tab { display: flex; flex: none; border-right: 1px solid #1f1f1f; white-space: nowrap; }
.tab.first { width: 221px; padding-left: 70px; }
.tab .x { width: 22px; font-size: 8px; color: #ccc; line-height: 20px; }
.tab.second { width: 232px; }
.tab.active { width: 235px; background: #494949; color: #e6e6e6; }
.canvas-row { flex: 1; min-height: 0; display: flex; }
.canvas { flex: 1; position: relative; background: #5e5e5e; }
.artboard { position: absolute; left: 253px; top: 32px; }
.vscroll { display: flex; flex-direction: column; align-items: center; justify-content: space-between; width: 16px; padding: 6px 0; background: #333; border-left: 1px solid #262626; }
.vscroll .thumb { width: 15px; height: 15px; margin-bottom: 10px; background: #8c8c8c; }
.statusbar { flex: none; display: flex; align-items: stretch; height: 18px; padding-left: 4px; background: #494949; border-top: 1px solid #262626; border-bottom: 2px solid #777; }
.statusbar .combo { height: auto; border-width: 0 1px; }
.zoomer input { width: 40px; }
.pager input { width: 39px; }
.nav { align-self: center; margin: 0 8px; }
.tool-name { display: flex; align-items: center; justify-content: center; width: 198px; border-left: 1px solid #333; }
.play { display: flex; align-items: center; width: 18px; padding-left: 6px; border: solid #333; border-width: 0 1px; }
.hscroll { flex: 1; display: flex; align-items: center; justify-content: space-between; padding: 0 6px; background: #333; }
.hscroll .thumb { width: 15px; margin-right: 6px; align-self: stretch; background: #8c8c8c; }
.corner, .dots { background: radial-gradient(circle, #999 0 1px, transparent 1px) 0 0 / 3px 3px; }
.corner { width: 16px; clip-path: polygon(100% 20%, 100% 100%, 20% 100%); }

/* Icon rail */
.rail { display: flex; flex-direction: column; width: 39px; }
.rail-panels { background: #494949; border: solid #262626; border-width: 0 1px 1px 2px; }
.rail-head { display: flex; align-items: center; justify-content: flex-end; height: 11px; padding-right: 4px; background: #2e2e2e; }
.hgrip { display: block; width: 19px; height: 4px; margin: 0 auto; background: repeating-linear-gradient(90deg, #1f1f1f 0 1px, #5a5a5a 1px 2px); }
.rail-group { border-top: 1px solid #262626; padding-bottom: 2px; }
.rail-group .hgrip { margin: 3px auto; }
.rail-group button { display: flex; align-items: center; justify-content: center; width: 30px; height: 28px; margin: 0 auto; }
.rail-group .on { background: #303030; border: 1px solid #262626; border-radius: 3px; height: 26px; margin: 1px auto; }
.behind { flex: 1; display: flex; }
.behind-window { width: 30px; background: linear-gradient(90deg, #95a3ab, #bccdd5); }
.behind-edge { flex: 1; background: linear-gradient(#242424 0 20px, #333 20px 38px, #444 38px); }

/* Tools panel */
.tools { position: absolute; left: 0; top: -4px; width: 72px; padding-bottom: 7px; background: #494949; border: 1px solid #222; border-radius: 4px 4px 0 0; box-shadow: 1px 2px 5px rgba(0,0,0,.4); }
.tools-head { display: flex; align-items: center; justify-content: space-between; height: 14px; padding: 0 5px; background: #2e2e2e; color: #bbb; font-size: 9px; border-radius: 4px 4px 0 0; }
.tools > .hgrip { margin: 3px auto 6px; }
.tool-group { display: grid; grid-template-columns: 30px 30px; margin: 0 5px; padding-top: 1px; border-top: 1px solid #333; }
.hgrip + .tool-group { border-top-color: transparent; }
.tool-group button { position: relative; display: flex; align-items: center; justify-content: center; height: 24px; }
.tool-group .on { background: #303030; border: 1px solid #222; margin: 0 1px; }
.tool-group svg { width: 22px; height: 22px; }
.more::after { content: ""; position: absolute; right: 2px; bottom: 2px; border: solid transparent; border-width: 0 0 4px 4px; border-bottom-color: #ccc; }
.swatches { margin: 0 6px; padding-top: 4px; border-top: 1px solid #333; }
.modes { display: grid; grid-template-columns: repeat(3, 20px); height: 19px; margin: 4px 6px 0; border: 1px solid #2a2a2a; }
.modes button { display: flex; align-items: center; justify-content: center; border-right: 1px solid #2a2a2a; background: #5a5a5a; }
.modes .on { background: #2e2e2e; }
.drawmodes { margin-top: 6px; height: 18px; }
.screenmode { margin: 8px auto 0 22px; }

/* Layers panel */
.layers { position: absolute; right: 39px; top: 342px; width: 242px; background: #494949; border: 1px solid #222; border-top-width: 3px; box-shadow: -1px 1px 4px rgba(0,0,0,.3); }
.layer-tabs { display: flex; height: 17px; background: #2e2e2e; border-bottom: 1px solid #262626; }
.layer-tabs svg { margin: 2px 4px 0 auto; }
.ltab { height: 17px; padding: 0 5px 0 7px; line-height: 16px; color: #a2a2a2; border-right: 1px solid #222; }
.ltab.on { background: #494949; color: #eee; }
.layer-list { height: 128px; margin: 6px 5px 0; border: 1px solid #2a2a2a; }
.layer-row { display: flex; align-items: center; height: 21px; background: #5d6878; border-bottom: 1px solid #2e2e2e; }
.layer-row span { align-self: stretch; }
.eye { display: flex; align-items: center; width: 21px; padding-left: 3px; border-right: 1px solid #333; }
.lock { width: 22px; border-right: 1px solid #333; }
.bar { width: 5px; background: #4a80ff; border-right: 1px solid #333; }
.tri { margin: 0 10px 0 5px; }
.layer-row .layer-name { margin-left: 5px; line-height: 20px; }
.target { margin-left: auto; }
.layer-foot { display: flex; align-items: center; height: 18px; padding-left: 5px; }
.layer-foot svg { margin-left: auto; }
.dots { width: 11px; height: 11px; margin: 6px 0 0 16px; clip-path: polygon(100% 0, 100% 100%, 0 100%); }
.layer-grip { height: 8px; padding-top: 2px; border-top: 1px solid #262626; }

/* Reflect dialog */
.dialog { position: absolute; left: 429px; top: 68px; width: 326px; border-radius: 5px; background: #494949; box-shadow: 0 20px 44px 2px rgba(0,0,0,.6), 0 0 2px rgba(0,0,0,.5); font-size: 12px; }
.dialog h2 { margin: 0; height: 22px; border-radius: 5px 5px 0 0; border-bottom: 1px solid #b0b0b0; background: linear-gradient(#ebebeb, #d2d2d2); color: #444; font: 14px/22px "Liberation Sans", Arial, sans-serif; text-align: center; }
.dialog-body { padding: 22px 15px 29px 16px; }
fieldset { margin: 0 1px 0 0; min-width: 0; border: 1px solid #262626; padding: 4px 9px 7px; }
legend { padding: 0 4px 0 3px; margin-left: -4px; line-height: 17px; }
.line { display: flex; align-items: center; height: 28px; }
.tall { height: 46px; }
.options { margin-top: 15px; padding: 5px 9px 9px; }
.options .line { height: 22px; }
input[type="radio"], input[type="checkbox"] { appearance: none; flex: none; width: 12px; height: 12px; margin-right: 4px; border: 1px solid #262626; background: #565656; }
input[type="radio"] { border-radius: 50%; }
input[type="radio"]:checked { border-color: #262626; outline: 1px solid #e88a2a; background: radial-gradient(circle, #eee 0 2px, #555 3px); }
input[type="checkbox"]:disabled { background: #4e4e4e; border-color: #333; }
input:disabled + label { color: #808080; }
#to { position: relative; }
#to::after { content: ""; position: absolute; left: 4px; top: -2px; width: 4px; height: 9px; border: solid #aaa; border-width: 0 2px 2px 0; transform: rotate(40deg); }
#tp { margin-left: 13px; }
.flip { margin-left: 12px; }
.vflip { margin-left: 29px; }
.dial { margin: 0 8px 0 6px; }
.angle { width: 65px; height: 19px; padding-left: 5px; background: #a3a3a3; border: 1px solid #262626; color: #000; font-weight: 400; }
.preview { display: flex; align-items: center; height: 20px; margin-top: 14px; }
.actions { display: flex; align-items: center; margin-top: 19px; }
.actions button { width: 90px; height: 24px; border: 1px solid #262626; background: linear-gradient(#5e5e5e, #505050); }
.actions .cancel { margin-left: auto; }
.actions .ok { margin-left: 6px; width: 92px; height: 26px; border-width: 2px; }

/* Desktop and dock */
.desktop { flex: none; padding: 0 21px 0 20px; background: radial-gradient(circle at 30% 40%, #2f4a1c 0 1px, transparent 3px) 0 0 / 7px 9px, radial-gradient(circle, #243c16 0 1px, transparent 3px) 3px 2px / 11px 6px, #172810; border-top: 1px solid #333; }
.dock { display: flex; align-items: flex-start; justify-content: space-between; height: 38px; padding: 6px 4px 0 5px; border-radius: 5px 5px 0 0; background: #cfcfcf; }
.dock a { position: relative; width: 24px; height: 24px; }
.dock a svg { width: 24px; height: 24px; }
.dock .big svg { width: 27px; height: 27px; margin: -2px -1px; }
.run::after { content: ""; position: absolute; left: 11px; bottom: -6px; width: 3px; height: 3px; border-radius: 50%; background: #333; }
.badge { position: absolute; right: -3px; top: -3px; width: 10px; height: 10px; border-radius: 50%; background: #ee3b35; color: #fff; font-size: 7px; line-height: 10px; text-align: center; }
.dock .q { color: #b0b0b0; font: 300 26px/26px "Open Sans", sans-serif; text-align: center; }
.dock-sep { width: 8px; height: 28px; border-left: 1px solid #888; }
```
